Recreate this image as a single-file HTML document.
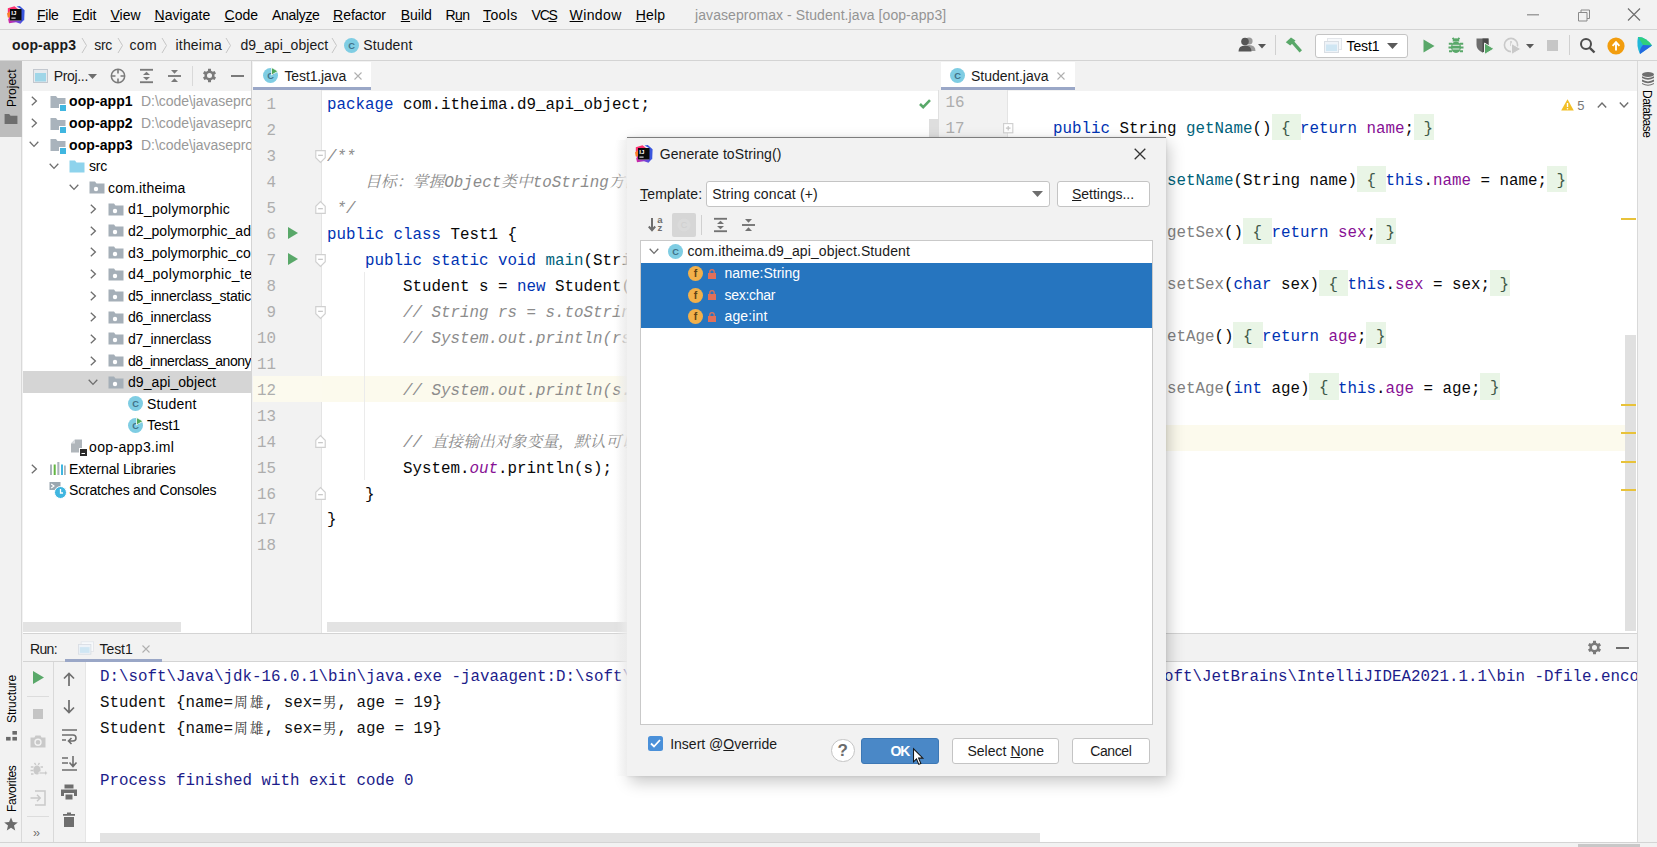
<!DOCTYPE html><html><head><meta charset='utf-8'><title>javasepromax - Student.java [oop-app3]</title><style>
*{box-sizing:border-box;margin:0;padding:0}
html,body{width:1657px;height:847px;overflow:hidden;background:#f2f2f2;}
body{position:relative;font-family:"Liberation Sans","Noto Sans CJK SC",sans-serif;font-size:14px;color:#000;}
.a{position:absolute;white-space:pre;}
.t{position:absolute;white-space:pre;line-height:20px;height:20px;}
.m{font-family:"Liberation Mono","Noto Serif CJK SC",monospace;font-size:15.83px;white-space:pre;}
u{text-decoration:underline;text-underline-offset:1.2px;text-decoration-thickness:1px}
svg{position:absolute;overflow:visible}
.kw{color:#0033b3} .cm{color:#8c8c8c;font-style:italic} .fn{color:#00627a} .fd{color:#871094} .un{color:#808080}
.fb{background:#e9f5e6;padding:6.2px 1px 2.2px 0;margin-right:-1px;color:#3f5a49}
.cj{display:inline-block;width:15.83px;font-size:13.8px;text-align:center;color:#3a3a3a}
</style></head><body>
<div class='a' style='left:0;top:0;width:1657px;height:30px;background:#f2f2f2;border-bottom:1px solid #d4d4d4'></div>
<svg style="left:7px;top:6px" width="18" height="18" viewBox="0 0 18 18">
<defs><linearGradient id="lgA" x1="0" y1="0" x2="1" y2="0"><stop offset="0" stop-color="#d6249f"/><stop offset="0.5" stop-color="#8a3fd1"/><stop offset="1" stop-color="#2b5be8"/></linearGradient></defs>
<path d="M0.8 2.2 L7.5 0.2 L11 3 L3 10 L0.8 8 Z" fill="#fc2f6e"/><path d="M0 7.5 L3 5 L3 12 L0.8 11.5 Z" fill="#fb7d2a"/>
<path d="M9.5 0.6 L12.8 0 L17.6 4.2 L17.2 14.2 L14 14.2 L14 3 Z" fill="#3a56dd"/>
<path d="M1.2 13.2 L3 10.5 L3 14.5 L14 14.5 L14 12 L17.2 13.5 L13.5 17.8 L9 16.2 L2 17.3 Z" fill="url(#lgA)"/>
<rect x="3" y="3" width="11.5" height="11.5" fill="#0a0a0a"/>
<rect x="4.4" y="11.6" width="4.2" height="1" fill="#fff"/>
<text x="4.2" y="9.4" font-family='"Liberation Sans",sans-serif' font-size="6.2" font-weight="700" fill="#fff">IJ</text></svg>
<div class='t' style='left:37px;top:5px;letter-spacing:-0.265px;'><u>F</u>ile</div>
<div class='t' style='left:72.5px;top:5px;letter-spacing:-0.106px;'><u>E</u>dit</div>
<div class='t' style='left:110.5px;top:5px;letter-spacing:-0.023px;'><u>V</u>iew</div>
<div class='t' style='left:154.5px;top:5px;letter-spacing:0.068px;'><u>N</u>avigate</div>
<div class='t' style='left:224.5px;top:5px;letter-spacing:0.008px;'><u>C</u>ode</div>
<div class='t' style='left:272px;top:5px;letter-spacing:-0.330px;'>Analy<u>z</u>e</div>
<div class='t' style='left:333px;top:5px;letter-spacing:0.011px;'><u>R</u>efactor</div>
<div class='t' style='left:400.8px;top:5px;letter-spacing:-0.027px;'><u>B</u>uild</div>
<div class='t' style='left:445.4px;top:5px;letter-spacing:-0.561px;'>R<u>u</u>n</div>
<div class='t' style='left:483px;top:5px;letter-spacing:0.363px;'><u>T</u>ools</div>
<div class='t' style='left:531.6px;top:5px;letter-spacing:-1.263px;'>VC<u>S</u></div>
<div class='t' style='left:569.6px;top:5px;letter-spacing:0.368px;'><u>W</u>indow</div>
<div class='t' style='left:635.8px;top:5px;letter-spacing:0.176px;'><u>H</u>elp</div>
<div class='t' style='left:695px;top:5px;color:#949494;letter-spacing:0.080px;'>javasepromax - Student.java [oop-app3]</div>
<svg style="left:1520px;top:4px" width="130" height="22" viewBox="0 0 130 22" fill="none" stroke="#8a8a8a" stroke-width="1.2">
<path d="M7 10.8 H19"/><path d="M58.5 8.5 h8.5 v8.5 h-8.5 z M61 8.5 v-2.5 h8.5 v8.5 h-2.5" stroke-width="1"/><path d="M108 4.5 L120 16.5 M120 4.5 L108 16.5" stroke="#6e6e6e"/></svg>
<div class='a' style='left:0;top:30px;width:1657px;height:31px;background:#f2f2f2;border-bottom:1px solid #d4d4d4'></div>
<div class='t' style='left:12px;top:35px;font-weight:700;color:#1a1a1a;letter-spacing:0.151px;'>oop-app3</div>
<div class='t' style='left:94.2px;top:35px;color:#1a1a1a;letter-spacing:-0.288px;'>src</div>
<div class='t' style='left:129.5px;top:35px;color:#1a1a1a;letter-spacing:0.350px;'>com</div>
<div class='t' style='left:175.5px;top:35px;color:#1a1a1a;letter-spacing:0.195px;'>itheima</div>
<div class='t' style='left:240.5px;top:35px;color:#1a1a1a;letter-spacing:0.039px;'>d9_api_object</div>
<div class='t' style='left:363.2px;top:35px;color:#1a1a1a;letter-spacing:0.148px;'>Student</div>
<svg style='left:81px;top:37px' width='7' height='17' viewBox='0 0 7 17' fill='none' stroke='#c6c6c6' stroke-width='1'><path d='M1 1 L5.5 8.5 L1 16'/></svg>
<svg style='left:117px;top:37px' width='7' height='17' viewBox='0 0 7 17' fill='none' stroke='#c6c6c6' stroke-width='1'><path d='M1 1 L5.5 8.5 L1 16'/></svg>
<svg style='left:161px;top:37px' width='7' height='17' viewBox='0 0 7 17' fill='none' stroke='#c6c6c6' stroke-width='1'><path d='M1 1 L5.5 8.5 L1 16'/></svg>
<svg style='left:225px;top:37px' width='7' height='17' viewBox='0 0 7 17' fill='none' stroke='#c6c6c6' stroke-width='1'><path d='M1 1 L5.5 8.5 L1 16'/></svg>
<svg style='left:331px;top:37px' width='7' height='17' viewBox='0 0 7 17' fill='none' stroke='#c6c6c6' stroke-width='1'><path d='M1 1 L5.5 8.5 L1 16'/></svg>
<svg style='left:344px;top:37.5px;opacity:1' width='15.0' height='15.0' viewBox='0 0 15 15'><circle cx='7.5' cy='7.5' r='7.5' fill='#7fcde3'/><text x='7.5' y='10.8' text-anchor='middle' font-family='"Liberation Sans",sans-serif' font-size='9.3' font-weight='700' fill='#3f7187'>C</text></svg>
<svg style="left:1238px;top:36px" width="30" height="18" viewBox="0 0 30 18">
<circle cx="11" cy="5" r="3.6" fill="#9a9a9a"/><path d="M4.5 15 q0 -6 6.5 -6 q6.5 0 6.5 6 z" fill="#9a9a9a"/>
<circle cx="7" cy="5.5" r="3.8" fill="#555"/><path d="M0.5 15.5 q0 -6 6.5 -6 q6.5 0 6.5 6 z" fill="#555"/>
<path d="M20 8 h8 l-4 4.5 z" fill="#555"/></svg>
<div class='a' style='left:1275px;top:35px;width:1px;height:20px;background:#d0d0d0'></div>
<svg style="left:1285px;top:37px" width="18" height="17" viewBox="0 0 18 17">
<path d="M6.5 6.2 L8.8 4 L17 13.2 L14.6 15.6 Z" fill="#59a869"/><path d="M0.8 5.2 L6 0.6 L10.5 3.5 L5.2 8.6 Z" fill="#59a869"/></svg>
<div class='a' style='left:1315px;top:34px;width:93px;height:24px;background:#fff;border:1px solid #c4c4c4;border-radius:3px'></div>
<svg style="left:1324px;top:38px" width="18" height="15" viewBox="0 0 18 15"><rect x="3.5" y="0.5" width="14" height="11" fill="#f7f9fb" stroke="#e3e6ea"/><rect x="0.5" y="3.5" width="14" height="11" fill="#eef3f8" stroke="#d9dee4"/><rect x="2" y="6.5" width="11" height="6.5" fill="#cfe6f3"/></svg>
<div class='t' style='left:1346.5px;top:36px;letter-spacing:-0.092px;'>Test1</div>
<svg style='left:1387px;top:43px' width='11' height='6' viewBox='0 0 11 6'><path d='M0 0 h11 l-5.5 6 z' fill='#5a5a5a'/></svg>
<svg style='left:1423px;top:39px' width='12' height='14' viewBox='0 0 12 14'><path d='M0.5 0.5 L11.5 7 L0.5 13.5 Z' fill='#59a869'/></svg>
<svg style="left:1448px;top:37px" width="16" height="17" viewBox="0 0 16 17" fill="#59a869" stroke="#59a869">
<ellipse cx="8" cy="10.2" rx="5" ry="5.8" stroke="none"/><path d="M4.6 4.6 a3.4 3.4 0 0 1 6.8 0 z" stroke="none"/>
<path d="M0.8 6.8 H4 M12 6.8 H15.2 M0.5 10.5 H4 M12 10.5 H15.5 M1 14.2 H4 M12 14.2 H15 M4.6 0.8 L6.2 2.8 M11.4 0.8 L9.8 2.8" stroke-width="1.9" fill="none"/>
<path d="M4.5 8.3 H11.5 M4.5 12 H11.5" stroke="#f2f2f2" stroke-width="0.9"/></svg>
<svg style="left:1476px;top:37px" width="18" height="18" viewBox="0 0 18 18"><path d="M0.5 1.5 H12.5 V8 Q12.5 13 6.5 15.5 Q0.5 13 0.5 8 Z" fill="#6e6e6e"/><path d="M6.5 1.5 H12.5 V8 Q12.5 13 6.5 15.5 Z" fill="#4a4a4a"/><path d="M8.5 6 L18 11.8 L8.5 17.5 Z" fill="#59a869" stroke="#f2f2f2" stroke-width="1"/></svg>
<svg style="left:1503px;top:37px" width="34" height="18" viewBox="0 0 34 18"><circle cx="8" cy="8" r="6.6" fill="none" stroke="#c9c9c9" stroke-width="1.6"/><path d="M8 4 V8.5 L10.5 10.5" stroke="#c9c9c9" stroke-width="1.4" fill="none"/><path d="M8.5 6.5 L18 12 L8.5 17.5 Z" fill="#c9c9c9" stroke="#f2f2f2" stroke-width="1"/><path d="M23 7 h8 l-4 4.5 z" fill="#5a5a5a"/></svg>
<div class='a' style='left:1546.5px;top:40px;width:11px;height:11px;background:#c6c6c6'></div>
<div class='a' style='left:1569px;top:35px;width:1px;height:20px;background:#d0d0d0'></div>
<svg style="left:1579px;top:37px" width="17" height="17" viewBox="0 0 17 17" fill="none" stroke="#4d4d4d"><circle cx="7" cy="7" r="5" stroke-width="2"/><path d="M10.8 10.8 L15.5 15.5" stroke-width="2.4"/></svg>
<svg style="left:1607px;top:37px" width="18" height="18" viewBox="0 0 18 18"><circle cx="9" cy="9" r="8.6" fill="#f29d0e"/><path d="M9 13.5 V6 M5.6 8.8 L9 5.2 L12.4 8.8" stroke="#fff" stroke-width="1.9" fill="none"/></svg>
<svg style="left:1636px;top:36px" width="17" height="19" viewBox="0 0 17 19"><path d="M2 1 Q9 0 16 9.5 L4 18 Q0 10 2 1 Z" fill="#21b7d9"/><path d="M2 1 Q10 1 16 9.5 L7 9 Z" fill="#2fd07c"/><path d="M16 9.5 L4 18 Q3 13 7 9 Z" fill="#2468e0"/></svg>
<div class='a' style='left:0;top:61px;width:22px;height:781px;background:#f2f2f2;border-right:1px solid #d9d9d9'></div>
<div class='a' style='left:0;top:61px;width:22px;height:76px;background:#bdbdbd'></div>
<div class='a' style='left:11.6px;top:107px;width:0;height:0'><div style='position:absolute;left:0;top:0;transform:rotate(-90deg);transform-origin:0 0;white-space:pre;font-size:12px;line-height:16px;height:16px;margin-top:0;letter-spacing:0.022px;'><span style='position:absolute;left:0;top:-8px'>Project</span></div></div>
<svg style="left:4px;top:113px" width="14" height="11" viewBox="0 0 14 12"><path d="M0 1 H5 L6.5 3 H14 V12 H0 Z" fill="#6e6e6e"/></svg>
<div class='a' style='left:12px;top:723px;width:0;height:0'><div style='position:absolute;left:0;top:0;transform:rotate(-90deg);transform-origin:0 0;white-space:pre;font-size:12px;line-height:16px;height:16px;margin-top:0;letter-spacing:-0.076px;'><span style='position:absolute;left:0;top:-8px'>Structure</span></div></div>
<svg style="left:6px;top:730.5px" width="11" height="10" viewBox="0 0 12 11" fill="#6a6a6a"><rect x="7" y="0" width="5" height="4"/><rect x="0" y="6.5" width="5" height="4"/><rect x="7" y="6.5" width="5" height="4"/></svg>
<div class='a' style='left:12px;top:811.5px;width:0;height:0'><div style='position:absolute;left:0;top:0;transform:rotate(-90deg);transform-origin:0 0;white-space:pre;font-size:12px;line-height:16px;height:16px;margin-top:0;letter-spacing:-0.317px;'><span style='position:absolute;left:0;top:-8px'>Favorites</span></div></div>
<svg style="left:4px;top:817px" width="14" height="14" viewBox="0 0 14 14"><path d="M7 0.5 L8.9 5 L13.8 5.4 L10 8.6 L11.2 13.4 L7 10.8 L2.8 13.4 L4 8.6 L0.2 5.4 L5.1 5 Z" fill="#6a6a6a"/></svg>
<div class='a' style='left:23px;top:61px;width:229px;height:572px;background:#fff;border-right:1px solid #d4d4d4'></div>
<div class='a' style='left:23px;top:61px;width:228px;height:29.5px;background:#f2f2f2;'></div>
<svg style="left:33px;top:69px" width="15" height="14" viewBox="0 0 15 14"><rect x="0.5" y="0.5" width="14" height="13" fill="#e6eaee" stroke="#c3c8cf"/><rect x="2" y="4" width="11" height="8.5" fill="#9fd6e8"/></svg>
<div class='t' style='left:53.7px;top:66px;color:#1a1a1a;letter-spacing:-0.324px;'>Proj...</div>
<svg style='left:88px;top:74px' width='9' height='5' viewBox='0 0 9 5'><path d='M0 0 h9 l-4.5 5 z' fill='#6e6e6e'/></svg>
<svg style="left:110px;top:68px" width="16" height="16" viewBox="0 0 16 16" fill="none" stroke="#7a7a7a" stroke-width="1.5"><circle cx="8" cy="8" r="6.7"/><path d="M8 1 V5.5 M8 10.5 V15 M1 8 H5.5 M10.5 8 H15" stroke-width="1.6"/></svg>
<svg style="left:139.5px;top:68px" width="13" height="16" viewBox="0 0 14 16" fill="#7a7a7a"><rect x="0" y="0.3" width="14" height="2"/><rect x="0" y="13.7" width="14" height="2"/><path d="M7 3.5 L10.8 7 H3.2 Z"/><path d="M7 12.5 L10.8 9 H3.2 Z"/></svg>
<svg style="left:167.5px;top:68px" width="13" height="16" viewBox="0 0 14 16" fill="#7a7a7a"><rect x="0" y="7" width="14" height="2"/><path d="M7 5.5 L10.8 1.5 H3.2 Z"/><path d="M7 10.5 L10.8 14.5 H3.2 Z"/></svg>
<div class='a' style='left:192px;top:66px;width:1px;height:20px;background:#d9d9d9'></div>
<svg style='left:201.5px;top:68px' width='15' height='15' viewBox='0 0 16 16' fill='#7a7a7a'><path d="M6.33 2.86 L6.48 0.86 L9.52 0.86 L9.67 2.86 L11.61 3.99 L13.42 3.12 L14.94 5.74 L13.28 6.88 L13.28 9.12 L14.94 10.26 L13.42 12.88 L11.61 12.01 L9.67 13.14 L9.52 15.14 L6.48 15.14 L6.33 13.14 L4.39 12.01 L2.58 12.88 L1.06 10.26 L2.72 9.12 L2.72 6.88 L1.06 5.74 L2.58 3.12 L4.39 3.99 Z M10.70 8 a2.7 2.7 0 1 0 -5.40 0 a2.7 2.7 0 1 0 5.40 0 Z" fill-rule="evenodd"/></svg>
<div class='a' style='left:231px;top:75px;width:13px;height:2px;background:#7a7a7a'></div>
<div class='a' style='left:23px;top:371.33px;width:228px;height:21.61px;background:#d5d5d5'></div>
<svg style='left:31px;top:96.21px' width='7' height='10' viewBox='0 0 7 10' fill='none' stroke='#6e6e6e' stroke-width='1.3'><path d='M0.8 0.7 L5.4 5 L0.8 9.3'/></svg>
<svg style='left:50px;top:95.01px' width='17' height='16' viewBox='0 0 17 16'><path d='M0.5 1 H6 L7.5 3 H15.5 V13 H0.5 Z' fill='#a9b3bc'/><rect x='9' y='9' width='7' height='7' fill='#fff'/><rect x='10' y='10' width='6' height='6' fill='#40b6e0'/></svg>
<div class='t' style='left:69px;top:91.41px;font-weight:700;letter-spacing:0.088px;'>oop-app1</div>
<div class='t' style='left:141px;top:91.31px;letter-spacing:-0.050px;width:110px;overflow:hidden;color:#999;'>D:\code\javasepromax</div>
<svg style='left:31px;top:117.81px' width='7' height='10' viewBox='0 0 7 10' fill='none' stroke='#6e6e6e' stroke-width='1.3'><path d='M0.8 0.7 L5.4 5 L0.8 9.3'/></svg>
<svg style='left:50px;top:116.61px' width='17' height='16' viewBox='0 0 17 16'><path d='M0.5 1 H6 L7.5 3 H15.5 V13 H0.5 Z' fill='#a9b3bc'/><rect x='9' y='9' width='7' height='7' fill='#fff'/><rect x='10' y='10' width='6' height='6' fill='#40b6e0'/></svg>
<div class='t' style='left:69px;top:113.02px;font-weight:700;letter-spacing:0.088px;'>oop-app2</div>
<div class='t' style='left:141px;top:112.91px;letter-spacing:-0.050px;width:110px;overflow:hidden;color:#999;'>D:\code\javasepromax</div>
<svg style='left:29px;top:140.93px' width='10' height='7' viewBox='0 0 10 7' fill='none' stroke='#6e6e6e' stroke-width='1.3'><path d='M0.7 0.8 L5 5.4 L9.3 0.8'/></svg>
<svg style='left:50px;top:138.23px' width='17' height='16' viewBox='0 0 17 16'><path d='M0.5 1 H6 L7.5 3 H15.5 V13 H0.5 Z' fill='#a9b3bc'/><rect x='9' y='9' width='7' height='7' fill='#fff'/><rect x='10' y='10' width='6' height='6' fill='#40b6e0'/></svg>
<div class='t' style='left:69px;top:134.62px;font-weight:700;letter-spacing:0.088px;'>oop-app3</div>
<div class='t' style='left:141px;top:134.53px;letter-spacing:-0.050px;width:110px;overflow:hidden;color:#999;'>D:\code\javasepromax</div>
<svg style='left:49px;top:162.54px' width='10' height='7' viewBox='0 0 10 7' fill='none' stroke='#6e6e6e' stroke-width='1.3'><path d='M0.7 0.8 L5 5.4 L9.3 0.8'/></svg>
<svg style='left:69px;top:159.54px' width='16' height='13' viewBox='0 0 16 13'><path d='M0.5 0.5 H6 L7.5 2.5 H15.5 V12.5 H0.5 Z' fill='#8ed3ec'/></svg>
<div class='t' style='left:89px;top:156.14px;letter-spacing:-0.221px;'>src</div>
<svg style='left:69px;top:184.15px' width='10' height='7' viewBox='0 0 10 7' fill='none' stroke='#6e6e6e' stroke-width='1.3'><path d='M0.7 0.8 L5 5.4 L9.3 0.8'/></svg>
<svg style='left:89px;top:181.15px' width='16' height='13' viewBox='0 0 16 13'><path d='M0.5 0.5 H6 L7.5 2.5 H15.5 V12.5 H0.5 Z' fill='#a5afb8'/><circle cx='7' cy='8' r='2.2' fill='#fff'/></svg>
<div class='t' style='left:108px;top:177.75px;letter-spacing:0.184px;'>com.itheima</div>
<svg style='left:90px;top:204.25px' width='7' height='10' viewBox='0 0 7 10' fill='none' stroke='#6e6e6e' stroke-width='1.3'><path d='M0.8 0.7 L5.4 5 L0.8 9.3'/></svg>
<svg style='left:108px;top:202.75px' width='16' height='13' viewBox='0 0 16 13'><path d='M0.5 0.5 H6 L7.5 2.5 H15.5 V12.5 H0.5 Z' fill='#a5afb8'/><circle cx='7' cy='8' r='2.2' fill='#fff'/></svg>
<div class='t' style='left:128px;top:199.35px;letter-spacing:0.226px;width:123px;overflow:hidden;'>d1_polymorphic</div>
<svg style='left:90px;top:225.87px' width='7' height='10' viewBox='0 0 7 10' fill='none' stroke='#6e6e6e' stroke-width='1.3'><path d='M0.8 0.7 L5.4 5 L0.8 9.3'/></svg>
<svg style='left:108px;top:224.37px' width='16' height='13' viewBox='0 0 16 13'><path d='M0.5 0.5 H6 L7.5 2.5 H15.5 V12.5 H0.5 Z' fill='#a5afb8'/><circle cx='7' cy='8' r='2.2' fill='#fff'/></svg>
<div class='t' style='left:128px;top:220.97px;letter-spacing:0.047px;width:123px;overflow:hidden;'>d2_polymorphic_advantage</div>
<svg style='left:90px;top:247.47px' width='7' height='10' viewBox='0 0 7 10' fill='none' stroke='#6e6e6e' stroke-width='1.3'><path d='M0.8 0.7 L5.4 5 L0.8 9.3'/></svg>
<svg style='left:108px;top:245.97px' width='16' height='13' viewBox='0 0 16 13'><path d='M0.5 0.5 H6 L7.5 2.5 H15.5 V12.5 H0.5 Z' fill='#a5afb8'/><circle cx='7' cy='8' r='2.2' fill='#fff'/></svg>
<div class='t' style='left:128px;top:242.57px;letter-spacing:0.093px;width:123px;overflow:hidden;'>d3_polymorphic_convert</div>
<svg style='left:90px;top:269.08px' width='7' height='10' viewBox='0 0 7 10' fill='none' stroke='#6e6e6e' stroke-width='1.3'><path d='M0.8 0.7 L5.4 5 L0.8 9.3'/></svg>
<svg style='left:108px;top:267.58px' width='16' height='13' viewBox='0 0 16 13'><path d='M0.5 0.5 H6 L7.5 2.5 H15.5 V12.5 H0.5 Z' fill='#a5afb8'/><circle cx='7' cy='8' r='2.2' fill='#fff'/></svg>
<div class='t' style='left:128px;top:264.19px;letter-spacing:0.358px;width:123px;overflow:hidden;'>d4_polymorphic_test</div>
<svg style='left:90px;top:290.69px' width='7' height='10' viewBox='0 0 7 10' fill='none' stroke='#6e6e6e' stroke-width='1.3'><path d='M0.8 0.7 L5.4 5 L0.8 9.3'/></svg>
<svg style='left:108px;top:289.19px' width='16' height='13' viewBox='0 0 16 13'><path d='M0.5 0.5 H6 L7.5 2.5 H15.5 V12.5 H0.5 Z' fill='#a5afb8'/><circle cx='7' cy='8' r='2.2' fill='#fff'/></svg>
<div class='t' style='left:128px;top:285.80px;letter-spacing:-0.193px;width:123px;overflow:hidden;'>d5_innerclass_static</div>
<svg style='left:90px;top:312.31px' width='7' height='10' viewBox='0 0 7 10' fill='none' stroke='#6e6e6e' stroke-width='1.3'><path d='M0.8 0.7 L5.4 5 L0.8 9.3'/></svg>
<svg style='left:108px;top:310.81px' width='16' height='13' viewBox='0 0 16 13'><path d='M0.5 0.5 H6 L7.5 2.5 H15.5 V12.5 H0.5 Z' fill='#a5afb8'/><circle cx='7' cy='8' r='2.2' fill='#fff'/></svg>
<div class='t' style='left:128px;top:307.41px;letter-spacing:-0.261px;width:123px;overflow:hidden;'>d6_innerclass</div>
<svg style='left:90px;top:333.92px' width='7' height='10' viewBox='0 0 7 10' fill='none' stroke='#6e6e6e' stroke-width='1.3'><path d='M0.8 0.7 L5.4 5 L0.8 9.3'/></svg>
<svg style='left:108px;top:332.42px' width='16' height='13' viewBox='0 0 16 13'><path d='M0.5 0.5 H6 L7.5 2.5 H15.5 V12.5 H0.5 Z' fill='#a5afb8'/><circle cx='7' cy='8' r='2.2' fill='#fff'/></svg>
<div class='t' style='left:128px;top:329.02px;letter-spacing:-0.261px;width:123px;overflow:hidden;'>d7_innerclass</div>
<svg style='left:90px;top:355.53px' width='7' height='10' viewBox='0 0 7 10' fill='none' stroke='#6e6e6e' stroke-width='1.3'><path d='M0.8 0.7 L5.4 5 L0.8 9.3'/></svg>
<svg style='left:108px;top:354.03px' width='16' height='13' viewBox='0 0 16 13'><path d='M0.5 0.5 H6 L7.5 2.5 H15.5 V12.5 H0.5 Z' fill='#a5afb8'/><circle cx='7' cy='8' r='2.2' fill='#fff'/></svg>
<div class='t' style='left:128px;top:350.63px;letter-spacing:-0.491px;width:123px;overflow:hidden;'>d8_innerclass_anonymous</div>
<svg style='left:88px;top:378.64px' width='10' height='7' viewBox='0 0 10 7' fill='none' stroke='#6e6e6e' stroke-width='1.3'><path d='M0.7 0.8 L5 5.4 L9.3 0.8'/></svg>
<svg style='left:108px;top:375.64px' width='16' height='13' viewBox='0 0 16 13'><path d='M0.5 0.5 H6 L7.5 2.5 H15.5 V12.5 H0.5 Z' fill='#a5afb8'/><circle cx='7' cy='8' r='2.2' fill='#fff'/></svg>
<div class='t' style='left:128px;top:372.24px;letter-spacing:0.062px;width:123px;overflow:hidden;'>d9_api_object</div>
<svg style='left:128px;top:396.24499999999995px;opacity:1' width='15.0' height='15.0' viewBox='0 0 15 15'><circle cx='7.5' cy='7.5' r='7.5' fill='#7fcde3'/><text x='7.5' y='10.8' text-anchor='middle' font-family='"Liberation Sans",sans-serif' font-size='9.3' font-weight='700' fill='#3f7187'>C</text></svg>
<div class='t' style='left:147px;top:393.84px;letter-spacing:0.177px;'>Student</div>
<svg style='left:128px;top:417.85499999999996px;opacity:1' width='15.0' height='15.0' viewBox='0 0 15 15'><circle cx='7.5' cy='7.5' r='7.5' fill='#7fcde3'/><text x='7.5' y='10.8' text-anchor='middle' font-family='"Liberation Sans",sans-serif' font-size='9.3' font-weight='700' fill='#3f7187'>C</text><path d='M8.5 -0.5 L15 3.2 L8.5 7 Z' fill='#4fa85a' stroke='#fff' stroke-width='0.8'/></svg>
<div class='t' style='left:147px;top:415.45px;letter-spacing:-0.092px;'>Test1</div>
<svg style='left:70px;top:438.96px' width='17' height='17' viewBox='0 0 17 17'><path d='M5 0.5 H12 V13.5 H1 V4.5 Z' fill='#b0b6bb'/><path d='M5 0.5 V4.5 H1 Z' fill='#d9dcdf'/><rect x='9' y='9' width='8' height='8' fill='#fff'/><rect x='10' y='10' width='7' height='7' fill='#2b2b2b'/><rect x='11.5' y='14' width='3.5' height='1' fill='#fff'/></svg>
<div class='t' style='left:89px;top:437.06px;letter-spacing:0.363px;'>oop-app3.iml</div>
<svg style='left:31px;top:463.57px' width='7' height='10' viewBox='0 0 7 10' fill='none' stroke='#6e6e6e' stroke-width='1.3'><path d='M0.8 0.7 L5.4 5 L0.8 9.3'/></svg>
<svg style='left:50px;top:462.07px' width='16' height='13' viewBox='0 0 16 13'><rect x='0' y='2.5' width='2' height='10.5' fill='#aab3bb'/><rect x='3.7' y='2.5' width='2' height='10.5' fill='#62b543'/><rect x='7.3' y='0' width='2.1' height='13' fill='#aab3bb'/><rect x='11' y='2.5' width='2' height='10.5' fill='#40b6e0'/><rect x='14' y='3.5' width='1.8' height='9.5' fill='#aab3bb'/></svg>
<div class='t' style='left:69px;top:458.68px;letter-spacing:-0.125px;'>External Libraries</div>
<svg style='left:49px;top:481.19px' width='18' height='18' viewBox='0 0 18 18'><path d='M0.5 1 H11.5 V9 H0.5 Z' fill='#9aa7b0'/><path d='M2.2 3 L5 5 L2.2 7' stroke='#fff' stroke-width='1.1' fill='none'/><circle cx='11.5' cy='11.5' r='6' fill='#40b6e0' stroke='#fff' stroke-width='1'/><path d='M11.5 8 V12 H14' stroke='#fff' stroke-width='1.3' fill='none'/></svg>
<div class='t' style='left:69px;top:480.29px;letter-spacing:-0.202px;'>Scratches and Consoles</div>
<div class='a' style='left:23px;top:622px;width:158px;height:10px;background:#e3e3e3'></div>
<div class='a' style='left:253px;top:90.5px;width:1384px;height:542.5px;background:#fff'></div>
<div class='a' style='left:253px;top:62px;width:118px;height:28px;background:#fff;border-bottom:3px solid #9aa7c7'></div>
<svg style='left:263px;top:68px;opacity:1' width='15.0' height='15.0' viewBox='0 0 15 15'><circle cx='7.5' cy='7.5' r='7.5' fill='#7fcde3'/><text x='7.5' y='10.8' text-anchor='middle' font-family='"Liberation Sans",sans-serif' font-size='9.3' font-weight='700' fill='#3f7187'>C</text><path d='M8.5 -0.5 L15 3.2 L8.5 7 Z' fill='#4fa85a' stroke='#fff' stroke-width='0.8'/></svg>
<div class='t' style='left:284.5px;top:66px;color:#1a1a1a;letter-spacing:-0.133px;'>Test1.java</div>
<svg style='left:354px;top:72px' width='8' height='8' viewBox='0 0 8 8'><path d='M0.5 0.5 L7.5 7.5 M7.5 0.5 L0.5 7.5' stroke='#b0b0b0' stroke-width='1.1' fill='none'/></svg>
<div class='a' style='left:938px;top:90px;width:3px;height:543px;background:#f2f2f2;border-left:1px solid #e0e0e0'></div>
<div class='a' style='left:941px;top:62px;width:134px;height:28px;background:#fff;border-bottom:3px solid #9aa7c7'></div>
<svg style='left:950px;top:68px;opacity:1' width='15.0' height='15.0' viewBox='0 0 15 15'><circle cx='7.5' cy='7.5' r='7.5' fill='#7fcde3'/><text x='7.5' y='10.8' text-anchor='middle' font-family='"Liberation Sans",sans-serif' font-size='9.3' font-weight='700' fill='#3f7187'>C</text></svg>
<div class='t' style='left:971px;top:66px;color:#1a1a1a;letter-spacing:-0.036px;'>Student.java</div>
<svg style='left:1057px;top:72px' width='8' height='8' viewBox='0 0 8 8'><path d='M0.5 0.5 L7.5 7.5 M7.5 0.5 L0.5 7.5' stroke='#b0b0b0' stroke-width='1.1' fill='none'/></svg>
<div class='a' style='left:253px;top:90px;width:69px;height:543px;background:#f2f2f2;border-right:1px solid #e4e4e4'></div>
<div class='a' style='left:322px;top:376.04px;width:606px;height:25.94px;background:#fcfaed'></div>
<div class='a' style='left:253px;top:376.04px;width:69px;height:25.94px;background:#fcfaee'></div>
<div class='a m' style='left:235px;width:41px;text-align:right;top:93.40px;line-height:25.94px;color:#adadad'>1</div>
<div class='a m' style='left:235px;width:41px;text-align:right;top:119.34px;line-height:25.94px;color:#adadad'>2</div>
<div class='a m' style='left:235px;width:41px;text-align:right;top:145.28px;line-height:25.94px;color:#adadad'>3</div>
<div class='a m' style='left:235px;width:41px;text-align:right;top:171.22px;line-height:25.94px;color:#adadad'>4</div>
<div class='a m' style='left:235px;width:41px;text-align:right;top:197.16px;line-height:25.94px;color:#adadad'>5</div>
<div class='a m' style='left:235px;width:41px;text-align:right;top:223.10px;line-height:25.94px;color:#adadad'>6</div>
<div class='a m' style='left:235px;width:41px;text-align:right;top:249.04px;line-height:25.94px;color:#adadad'>7</div>
<div class='a m' style='left:235px;width:41px;text-align:right;top:274.98px;line-height:25.94px;color:#adadad'>8</div>
<div class='a m' style='left:235px;width:41px;text-align:right;top:300.92px;line-height:25.94px;color:#adadad'>9</div>
<div class='a m' style='left:235px;width:41px;text-align:right;top:326.86px;line-height:25.94px;color:#adadad'>10</div>
<div class='a m' style='left:235px;width:41px;text-align:right;top:352.80px;line-height:25.94px;color:#adadad'>11</div>
<div class='a m' style='left:235px;width:41px;text-align:right;top:378.74px;line-height:25.94px;color:#adadad'>12</div>
<div class='a m' style='left:235px;width:41px;text-align:right;top:404.68px;line-height:25.94px;color:#adadad'>13</div>
<div class='a m' style='left:235px;width:41px;text-align:right;top:430.62px;line-height:25.94px;color:#adadad'>14</div>
<div class='a m' style='left:235px;width:41px;text-align:right;top:456.56px;line-height:25.94px;color:#adadad'>15</div>
<div class='a m' style='left:235px;width:41px;text-align:right;top:482.50px;line-height:25.94px;color:#adadad'>16</div>
<div class='a m' style='left:235px;width:41px;text-align:right;top:508.44px;line-height:25.94px;color:#adadad'>17</div>
<div class='a m' style='left:235px;width:41px;text-align:right;top:534.38px;line-height:25.94px;color:#adadad'>18</div>
<svg style='left:288px;top:227.37px' width='10' height='12' viewBox='0 0 10 12'><path d='M0 0 L10 6 L0 12 Z' fill='#59a869'/></svg>
<svg style='left:288px;top:253.31px' width='10' height='12' viewBox='0 0 10 12'><path d='M0 0 L10 6 L0 12 Z' fill='#59a869'/></svg>
<svg style='left:315.0px;top:150.35px' width='11' height='13' viewBox='0 0 9 11'><path d='M0.5 0.5 H8.5 V6.5 L4.5 10.5 L0.5 6.5 Z' fill='#fff' stroke='#d0d0d0'/><path d='M2.5 4.5 H6.5' stroke='#c4c4c4'/></svg>
<svg style='left:315.0px;top:201.23px' width='11' height='13' viewBox='0 0 9 11'><path d='M0.5 10.5 H8.5 V4.5 L4.5 0.5 L0.5 4.5 Z' fill='#fff' stroke='#d0d0d0'/><path d='M2.5 6.5 H6.5' stroke='#c4c4c4'/></svg>
<svg style='left:315.0px;top:254.11px' width='11' height='13' viewBox='0 0 9 11'><path d='M0.5 0.5 H8.5 V6.5 L4.5 10.5 L0.5 6.5 Z' fill='#fff' stroke='#d0d0d0'/><path d='M2.5 4.5 H6.5' stroke='#c4c4c4'/></svg>
<svg style='left:315.0px;top:305.99px' width='11' height='13' viewBox='0 0 9 11'><path d='M0.5 0.5 H8.5 V6.5 L4.5 10.5 L0.5 6.5 Z' fill='#fff' stroke='#d0d0d0'/><path d='M2.5 4.5 H6.5' stroke='#c4c4c4'/></svg>
<svg style='left:315.0px;top:434.69px' width='11' height='13' viewBox='0 0 9 11'><path d='M0.5 10.5 H8.5 V4.5 L4.5 0.5 L0.5 4.5 Z' fill='#fff' stroke='#d0d0d0'/><path d='M2.5 6.5 H6.5' stroke='#c4c4c4'/></svg>
<svg style='left:315.0px;top:486.57px' width='11' height='13' viewBox='0 0 9 11'><path d='M0.5 10.5 H8.5 V4.5 L4.5 0.5 L0.5 4.5 Z' fill='#fff' stroke='#d0d0d0'/><path d='M2.5 6.5 H6.5' stroke='#c4c4c4'/></svg>
<div class='a' style='left:363.5px;top:272.28px;width:1px;height:207.52px;background:#ebebeb'></div>
<div class='a' style='left:327px;top:90px;width:600px;height:532px;overflow:hidden'>
<div class='a m' style='left:0;top:3.40px;line-height:25.94px;color:#080808'><span class='kw'>package</span> com.itheima.d9_api_object;</div>
<div class='a m' style='left:0;top:55.28px;line-height:25.94px;color:#080808'><span class='cm'>/**</span></div>
<div class='a m' style='left:0;top:81.22px;line-height:25.94px;color:#080808'><span class='cm'>    目标：掌握Object类中toString方法的使用。</span></div>
<div class='a m' style='left:0;top:107.16px;line-height:25.94px;color:#080808'><span class='cm'> */</span></div>
<div class='a m' style='left:0;top:133.10px;line-height:25.94px;color:#080808'><span class='kw'>public class</span> Test1 {</div>
<div class='a m' style='left:0;top:159.04px;line-height:25.94px;color:#080808'>    <span class='kw'>public static void</span> <span class='fn'>main</span>(String[] args) {</div>
<div class='a m' style='left:0;top:184.98px;line-height:25.94px;color:#080808'>        Student s = <span class='kw'>new</span> Student("周雄", '男', 19);</div>
<div class='a m' style='left:0;top:210.92px;line-height:25.94px;color:#080808'>        <span class='cm'>// String rs = s.toString();</span></div>
<div class='a m' style='left:0;top:236.86px;line-height:25.94px;color:#080808'>        <span class='cm'>// System.out.println(rs);</span></div>
<div class='a m' style='left:0;top:288.74px;line-height:25.94px;color:#080808'>        <span class='cm'>// System.out.println(s.toString());</span></div>
<div class='a m' style='left:0;top:340.62px;line-height:25.94px;color:#080808'>        <span class='cm'>// 直接输出对象变量，默认可以省略toString调用不写的</span></div>
<div class='a m' style='left:0;top:366.56px;line-height:25.94px;color:#080808'>        System.<span class='fd' style='font-style:italic'>out</span>.println(s);</div>
<div class='a m' style='left:0;top:392.50px;line-height:25.94px;color:#080808'>    }</div>
<div class='a m' style='left:0;top:418.44px;line-height:25.94px;color:#080808'>}</div>
</div>
<svg style='left:919px;top:99px' width='12' height='10' viewBox='0 0 12 10'><path d='M1 5 L4.2 8.2 L11 1.2' stroke='#59a869' stroke-width='2.6' fill='none'/></svg>
<div class='a' style='left:929px;top:119px;width:9.5px;height:30px;background:#dedede'></div>
<div class='a' style='left:327px;top:622px;width:400px;height:10px;background:#e3e3e3'></div>
<div class='a' style='left:941px;top:90px;width:67px;height:543px;background:#f2f2f2;border-right:1px solid #e4e4e4'></div>
<div class='a' style='left:1008px;top:425.22px;width:617px;height:25.94px;background:#fcfaed'></div>
<div class='a' style='left:941px;top:425.22px;width:67px;height:25.94px;background:#fcfaee'></div>
<div class='a m' style='left:945.5px;top:91.00px;line-height:25.94px;color:#adadad'>16</div>
<div class='a m' style='left:945.5px;top:116.94px;line-height:25.94px;color:#adadad'>17</div>
<svg style='left:1003px;top:123.41px' width='10.4' height='10.4' viewBox='0 0 9 9'><rect x='0.5' y='0.5' width='8' height='8' fill='#fff' stroke='#d0d0d0'/><path d='M2.5 4.5 H6.5 M4.5 2.5 V6.5' stroke='#c4c4c4'/></svg>
<div class='a m' style='left:1053px;top:117.24px;line-height:24px;color:#080808'><span class='kw'>public</span> String <span class='fn'>getName</span>()<span class='fb'> { </span><span class='kw'>return</span> <span class='fd'>name</span>;<span class='fb'> }</span></div>
<div class='a m' style='left:1053px;top:169.12px;line-height:24px;color:#080808'><span class='kw'>public void</span> <span class='fn'>setName</span>(String name)<span class='fb'> { </span><span class='kw'>this</span>.<span class='fd'>name</span> = name;<span class='fb'> }</span></div>
<div class='a m' style='left:1053px;top:221.00px;line-height:24px;color:#080808'><span class='kw'>public char</span> <span class='un'>getSex</span>()<span class='fb'> { </span><span class='kw'>return</span> <span class='fd'>sex</span>;<span class='fb'> }</span></div>
<div class='a m' style='left:1053px;top:272.88px;line-height:24px;color:#080808'><span class='kw'>public void</span> <span class='un'>setSex</span>(<span class='kw'>char</span> sex)<span class='fb'> { </span><span class='kw'>this</span>.<span class='fd'>sex</span> = sex;<span class='fb'> }</span></div>
<div class='a m' style='left:1053px;top:324.76px;line-height:24px;color:#080808'><span class='kw'>public int</span> <span class='un'>getAge</span>()<span class='fb'> { </span><span class='kw'>return</span> <span class='fd'>age</span>;<span class='fb'> }</span></div>
<div class='a m' style='left:1053px;top:376.64px;line-height:24px;color:#080808'><span class='kw'>public void</span> <span class='un'>setAge</span>(<span class='kw'>int</span> age)<span class='fb'> { </span><span class='kw'>this</span>.<span class='fd'>age</span> = age;<span class='fb'> }</span></div>
<svg style='left:1561px;top:99px' width='13' height='12' viewBox='0 0 13 12'><path d='M6.5 0.3 L12.8 11.5 H0.2 Z' fill='#f2bf26'/><path d='M6.5 4 V8' stroke='#fff' stroke-width='1.4'/><circle cx='6.5' cy='9.8' r='0.8' fill='#fff'/></svg>
<div class='t' style='left:1577.3px;top:96px;font-size:13px;color:#787878'>5</div>
<svg style='left:1596.5px;top:101.8px' width='10' height='6' viewBox='0 0 10 6' fill='none' stroke='#6e6e6e' stroke-width='1.4'><path d='M0.8 5.4 L5 1 L9.2 5.4'/></svg>
<svg style='left:1618.5px;top:101.8px' width='10' height='6' viewBox='0 0 10 6' fill='none' stroke='#6e6e6e' stroke-width='1.4'><path d='M0.8 0.6 L5 5 L9.2 0.6'/></svg>
<div class='a' style='left:1625px;top:335px;width:11px;height:296px;background:#e0e0e0'></div>
<div class='a' style='left:1621px;top:218px;width:15px;height:2px;background:#e8c23a'></div>
<div class='a' style='left:1621px;top:404px;width:15px;height:2px;background:#e8c23a'></div>
<div class='a' style='left:1621px;top:432px;width:15px;height:2px;background:#e8c23a'></div>
<div class='a' style='left:1621px;top:461px;width:15px;height:2px;background:#e8c23a'></div>
<div class='a' style='left:1621px;top:489px;width:15px;height:2px;background:#e8c23a'></div>
<div class='a' style='left:1637px;top:61px;width:20px;height:781px;background:#f2f2f2;border-left:1px solid #d9d9d9'></div>
<svg style="left:1642px;top:72px" width="12" height="14" viewBox="0 0 12 14" fill="#6e6e6e"><ellipse cx="6" cy="2.5" rx="6" ry="2.5"/><path d="M0 4.2 Q6 7.8 12 4.2 V6 Q6 9.6 0 6 Z M0 7.6 Q6 11.2 12 7.6 V9.4 Q6 13 0 9.4 Z M0 11 Q6 14.6 12 11 V12 Q6 15.6 0 12 Z"/></svg>
<div class='a' style='left:1647px;top:90px;width:0;height:0'><div style='position:absolute;transform:rotate(90deg);transform-origin:0 0;white-space:pre;font-size:12px;line-height:16px;letter-spacing:-0.484px;'><span style='position:absolute;left:0;top:-8px'>Database</span></div></div>
<div class='a' style='left:23px;top:633px;width:1614px;height:29px;background:#f2f2f2;border-top:1px solid #d4d4d4;border-bottom:1px solid #d4d4d4'></div>
<div class='a' style='left:23px;top:662px;width:1614px;height:180px;background:#fff'></div>
<div class='t' style='left:30px;top:639px;color:#1a1a1a;letter-spacing:-0.643px;'>Run:</div>
<div class='a' style='left:65px;top:659px;width:97px;height:3px;background:#9aa7c7'></div>
<svg style="left:78px;top:641px" width="16" height="14" viewBox="0 0 18 15"><rect x="3.5" y="0.5" width="14" height="11" fill="#f7f9fb" stroke="#e3e6ea"/><rect x="0.5" y="3.5" width="14" height="11" fill="#eef3f8" stroke="#d9dee4"/><rect x="2" y="6.5" width="11" height="6.5" fill="#cfe6f3"/></svg>
<div class='t' style='left:99.6px;top:639px;color:#1a1a1a;letter-spacing:-0.092px;'>Test1</div>
<svg style='left:142px;top:645px' width='8' height='8' viewBox='0 0 8 8'><path d='M0.5 0.5 L7.5 7.5 M7.5 0.5 L0.5 7.5' stroke='#b0b0b0' stroke-width='1.1' fill='none'/></svg>
<svg style='left:1586.5px;top:640px' width='15' height='15' viewBox='0 0 16 16' fill='#7a7a7a'><path d="M6.33 2.86 L6.48 0.86 L9.52 0.86 L9.67 2.86 L11.61 3.99 L13.42 3.12 L14.94 5.74 L13.28 6.88 L13.28 9.12 L14.94 10.26 L13.42 12.88 L11.61 12.01 L9.67 13.14 L9.52 15.14 L6.48 15.14 L6.33 13.14 L4.39 12.01 L2.58 12.88 L1.06 10.26 L2.72 9.12 L2.72 6.88 L1.06 5.74 L2.58 3.12 L4.39 3.99 Z M10.70 8 a2.7 2.7 0 1 0 -5.40 0 a2.7 2.7 0 1 0 5.40 0 Z" fill-rule="evenodd"/></svg>
<div class='a' style='left:1616px;top:647px;width:13px;height:2px;background:#6e6e6e'></div>
<div class='a' style='left:23px;top:662px;width:31px;height:180px;background:#f2f2f2;border-right:1px solid #d9d9d9'></div>
<div class='a' style='left:54px;top:662px;width:32px;height:180px;background:#f2f2f2;border-right:1px solid #e6e6e6;'></div>
<svg style='left:33px;top:671px' width='11' height='13' viewBox='0 0 11 13'><path d='M0 0 L11 6.5 L0 13 Z' fill='#59a869'/></svg>
<div class='a' style='left:27px;top:696px;width:22px;height:1px;background:#dcdcdc'></div>
<div class='a' style='left:33px;top:709px;width:10px;height:10px;background:#c4c4c4'></div>
<svg style="left:30px;top:735px" width="16" height="13" viewBox="0 0 16 13"><path d="M0.5 2.5 H4.5 L5.5 0.5 H10.5 L11.5 2.5 H15.5 V12.5 H0.5 Z" fill="#c9c9c9"/><circle cx="8" cy="7.3" r="3" fill="none" stroke="#f2f2f2" stroke-width="1.4"/></svg>
<svg style="left:30px;top:762px" width="17" height="17" viewBox="0 0 17 17" fill="#c9c9c9" stroke="#c9c9c9"><ellipse cx="7" cy="8" rx="3.6" ry="4.6" stroke="none"/><path d="M0.8 5 H3.5 M10.5 5 H13 M0.5 8.5 H3.5 M1 12 H3.5 M4.5 1 L5.8 2.8 M9.5 1 L8.2 2.8" stroke-width="1.3" fill="none"/><path d="M9 10 h6 v-2 l2.5 3 l-2.5 3 v-2 h-6 z" stroke="#f2f2f2" stroke-width="0.8"/></svg>
<svg style="left:30px;top:790px" width="16" height="16" viewBox="0 0 16 16" fill="none" stroke="#c9c9c9" stroke-width="1.5"><path d="M5 1 H15 V15 H5"/><path d="M0.5 8 H10 M7 4.8 L10.2 8 L7 11.2"/></svg>
<div class='a' style='left:27px;top:816px;width:22px;height:1px;background:#dcdcdc'></div>
<div class='t' style='left:33px;top:823px;font-size:12px;color:#6e6e6e;letter-spacing:-1px'>››</div>
<svg style='left:63px;top:672px' width='12' height='14' viewBox='0 0 12 14' fill='none' stroke='#6e6e6e' stroke-width='1.7'><path d='M6 14 V2 M1 6.5 L6 1.5 L11 6.5'/></svg>
<svg style='left:63px;top:700px' width='12' height='14' viewBox='0 0 12 14' fill='none' stroke='#6e6e6e' stroke-width='1.7'><path d='M6 0 V12 M1 7.5 L6 12.5 L11 7.5'/></svg>
<svg style='left:62px;top:729px' width='15' height='14' viewBox='0 0 15 14' fill='none' stroke='#6e6e6e' stroke-width='1.6'><path d='M0 1 H15 M0 6 H11 a3 3 0 0 1 0 6 H7 M0 11 H4 M9.5 9 L6.5 12 L9.5 15'/></svg>
<svg style='left:62px;top:756px' width='15' height='15' viewBox='0 0 15 15' fill='none' stroke='#6e6e6e' stroke-width='1.6'><path d='M0 2 H6 M0 7 H6 M0 14 H15 M11 0 V10 M7.5 6.5 L11 10.5 L14.5 6.5'/></svg>
<svg style="left:61px;top:784px" width="16" height="16" viewBox="0 0 16 16" fill="#6e6e6e"><rect x="3.5" y="0.5" width="9" height="4"/><path d="M0 5.5 H16 V12 H13 V9 H3 V12 H0 Z"/><rect x="4.5" y="10.5" width="7" height="5"/></svg>
<svg style="left:63px;top:812px" width="12" height="15" viewBox="0 0 12 15" fill="#6e6e6e"><path d="M0 2 H4 V0.5 H8 V2 H12 V3.8 H0 Z"/><path d="M1 5 H11 V15 H1 Z"/></svg>
<div class='a' style='left:100px;top:664px;width:1537px;height:26px;overflow:hidden'><div class='m' style='position:absolute;left:0;top:0;width:560px;overflow:hidden;line-height:26px;color:#1c1c8a'>D:\soft\Java\jdk-16.0.1\bin\java.exe -javaagent:D:\soft\JetBrains\IntelliJIDEA2021.1.1\lib\idea_rt.jar=54215:D:\s</div><div class='m' style='position:absolute;left:1064px;top:0;line-height:26px;color:#1c1c8a'>oft\JetBrains\IntelliJIDEA2021.1.1\bin -Dfile.encoding=UTF-8</div></div>
<div class='a m' style='left:100px;top:690.00px;line-height:26px;color:#101010;'>Student {name=<span class='cj'>周</span><span class='cj'>雄</span>, sex=<span class='cj'>男</span>, age = 19}</div>
<div class='a m' style='left:100px;top:716.00px;line-height:26px;color:#101010;'>Student {name=<span class='cj'>周</span><span class='cj'>雄</span>, sex=<span class='cj'>男</span>, age = 19}</div>
<div class='a m' style='left:100px;top:768.00px;line-height:26px;color:#1c1c8a;'>Process finished with exit code 0</div>
<div class='a' style='left:99.5px;top:832.5px;width:940px;height:9.5px;background:#e3e3e3'></div>
<div class='a' style='left:0;top:842px;width:1657px;height:5px;background:#f2f2f2;border-top:1px solid #d4d4d4'></div>
<div class='a' style='left:1578px;top:844px;width:62px;height:3px;background:#c8c8c8'></div>
<div class='a' style='left:627px;top:137px;width:539px;height:639px;background:#f2f2f2;border-top:1px solid #7d7d7d;box-shadow:3px 6px 15px 0 rgba(0,0,0,0.22),0 0 3px rgba(0,0,0,0.10)'></div>
<div class='a' style='left:616px;top:140px;width:11px;height:636px;background:linear-gradient(to right,rgba(248,248,248,0),rgba(240,240,240,0.85))'></div>
<svg style="left:634.5px;top:144.5px" width="18" height="18" viewBox="0 0 18 18">
<defs><linearGradient id="lgB" x1="0" y1="0" x2="1" y2="0"><stop offset="0" stop-color="#d6249f"/><stop offset="0.5" stop-color="#8a3fd1"/><stop offset="1" stop-color="#2b5be8"/></linearGradient></defs>
<path d="M0.8 2.2 L7.5 0.2 L11 3 L3 10 L0.8 8 Z" fill="#fc2f6e"/><path d="M0 7.5 L3 5 L3 12 L0.8 11.5 Z" fill="#fb7d2a"/>
<path d="M9.5 0.6 L12.8 0 L17.6 4.2 L17.2 14.2 L14 14.2 L14 3 Z" fill="#3a56dd"/>
<path d="M1.2 13.2 L3 10.5 L3 14.5 L14 14.5 L14 12 L17.2 13.5 L13.5 17.8 L9 16.2 L2 17.3 Z" fill="url(#lgB)"/>
<rect x="3" y="3" width="11.5" height="11.5" fill="#0a0a0a"/>
<rect x="4.4" y="11.6" width="4.2" height="1" fill="#fff"/>
<text x="4.2" y="9.4" font-family='"Liberation Sans",sans-serif' font-size="6.2" font-weight="700" fill="#fff">IJ</text></svg>
<div class='t' style='left:659.7px;top:144px;color:#1a1a1a;letter-spacing:0.103px;'>Generate toString()</div>
<svg style='left:1134px;top:148px' width='12' height='12' viewBox='0 0 12 12'><path d='M0.7 0.7 L11.3 11.3 M11.3 0.7 L0.7 11.3' stroke='#333' stroke-width='1.3'/></svg>
<div class='t' style='left:640px;top:184px;color:#1a1a1a;letter-spacing:0.189px;'><u>T</u>emplate:</div>
<div class='a' style='left:706px;top:180.5px;width:344px;height:26px;background:#fff;border:1px solid #c4c4c4;border-radius:3px'></div>
<div class='t' style='left:712.2px;top:184px;color:#1a1a1a;letter-spacing:0.153px;'>String concat (+)</div>
<svg style='left:1032px;top:191px' width='11' height='6' viewBox='0 0 11 6'><path d='M0 0 h11 l-5.5 6 z' fill='#6e6e6e'/></svg>
<div class='a' style='left:1057px;top:180.5px;width:93px;height:26px;background:#fff;border:1px solid #c4c4c4;border-radius:3px'></div>
<div class='t' style='left:1072px;top:184px;color:#1a1a1a;letter-spacing:-0.023px;'><u>S</u>ettings...</div>
<svg style="left:648px;top:216px" width="16" height="16" viewBox="0 0 16 16"><path d="M4 2 V14 M0.8 10.5 L4 14.2 L7.2 10.5" stroke="#6e6e6e" stroke-width="2" fill="none"/><text x="9.3" y="7.2" font-family='"Liberation Sans",sans-serif' font-size="9.5" font-weight="700" fill="#6e6e6e">a</text><text x="9.5" y="15.2" font-family='"Liberation Sans",sans-serif' font-size="9.5" font-weight="700" fill="#6e6e6e">z</text></svg>
<div class='a' style='left:672px;top:213px;width:24px;height:24px;background:#d6d6d6;border-radius:2px'></div>
<svg style='left:677px;top:218px' width='14' height='14' viewBox='0 0 14 14'><circle cx='7' cy='7' r='6.5' fill='#dadada'/><text x='7' y='10.3' text-anchor='middle' font-family='"Liberation Sans",sans-serif' font-size='9' fill='#cfcfcf'>C</text></svg>
<div class='a' style='left:701px;top:215px;width:1px;height:20px;background:#d0d0d0'></div>
<svg style="left:713.5px;top:217px" width="13" height="16" viewBox="0 0 14 16" fill="#737373"><rect x="0" y="0.3" width="14" height="2"/><rect x="0" y="13.7" width="14" height="2"/><path d="M7 3.5 L10.8 7 H3.2 Z"/><path d="M7 12.5 L10.8 9 H3.2 Z"/></svg>
<svg style="left:741.5px;top:217px" width="13" height="16" viewBox="0 0 14 16" fill="#737373"><rect x="0" y="7" width="14" height="2"/><path d="M7 5.5 L10.8 1.5 H3.2 Z"/><path d="M7 10.5 L10.8 14.5 H3.2 Z"/></svg>
<div class='a' style='left:640px;top:240px;width:513px;height:485px;background:#fff;border:1px solid #c9c9c9'></div>
<svg style='left:649px;top:248px' width='10' height='7' viewBox='0 0 10 7' fill='none' stroke='#6e6e6e' stroke-width='1.3'><path d='M0.7 0.8 L5 5.4 L9.3 0.8'/></svg>
<svg style='left:667.5px;top:244px;opacity:1' width='15.0' height='15.0' viewBox='0 0 15 15'><circle cx='7.5' cy='7.5' r='7.5' fill='#7fcde3'/><text x='7.5' y='10.8' text-anchor='middle' font-family='"Liberation Sans",sans-serif' font-size='9.3' font-weight='700' fill='#3f7187'>C</text></svg>
<div class='t' style='left:687.4px;top:241px;color:#1a1a1a;letter-spacing:0.118px;'>com.itheima.d9_api_object.Student</div>
<div class='a' style='left:641px;top:263px;width:511px;height:64.5px;background:#2675bf'></div>
<svg style='left:687.5px;top:266.00px' width='15' height='15' viewBox='0 0 15 15'><circle cx='7.5' cy='7.5' r='7.5' fill='#f2b04a'/><text x='7.5' y='11' text-anchor='middle' font-family='"Liberation Sans",sans-serif' font-size='10.5' font-weight='700' fill='#5e4116'>f</text></svg>
<svg style='left:708px;top:268.50px' width='8' height='10' viewBox='0 0 8 10'><rect x='0' y='4' width='8' height='6' fill='#e0705a'/><path d='M1.8 4 V2.8 a2.2 2.2 0 0 1 4.4 0 V4' stroke='#e0705a' stroke-width='1.2' fill='none'/></svg>
<div class='t' style='left:724.5px;top:263.00px;color:#fff;letter-spacing:0.001px;'>name:String</div>
<svg style='left:687.5px;top:287.60px' width='15' height='15' viewBox='0 0 15 15'><circle cx='7.5' cy='7.5' r='7.5' fill='#f2b04a'/><text x='7.5' y='11' text-anchor='middle' font-family='"Liberation Sans",sans-serif' font-size='10.5' font-weight='700' fill='#5e4116'>f</text></svg>
<svg style='left:708px;top:290.10px' width='8' height='10' viewBox='0 0 8 10'><rect x='0' y='4' width='8' height='6' fill='#e0705a'/><path d='M1.8 4 V2.8 a2.2 2.2 0 0 1 4.4 0 V4' stroke='#e0705a' stroke-width='1.2' fill='none'/></svg>
<div class='t' style='left:724.5px;top:284.60px;color:#fff;letter-spacing:-0.276px;'>sex:char</div>
<svg style='left:687.5px;top:309.20px' width='15' height='15' viewBox='0 0 15 15'><circle cx='7.5' cy='7.5' r='7.5' fill='#f2b04a'/><text x='7.5' y='11' text-anchor='middle' font-family='"Liberation Sans",sans-serif' font-size='10.5' font-weight='700' fill='#5e4116'>f</text></svg>
<svg style='left:708px;top:311.70px' width='8' height='10' viewBox='0 0 8 10'><rect x='0' y='4' width='8' height='6' fill='#e0705a'/><path d='M1.8 4 V2.8 a2.2 2.2 0 0 1 4.4 0 V4' stroke='#e0705a' stroke-width='1.2' fill='none'/></svg>
<div class='t' style='left:724.5px;top:306.20px;color:#fff;letter-spacing:0.138px;'>age:int</div>
<div class='a' style='left:648px;top:736px;width:15px;height:15px;background:#4a90d9;border-radius:2.5px'></div>
<svg style='left:650px;top:739px' width='11' height='9' viewBox='0 0 11 9'><path d='M1 4.5 L4 7.5 L10 1' stroke='#fff' stroke-width='1.8' fill='none'/></svg>
<div class='t' style='left:670.2px;top:734px;color:#1a1a1a;letter-spacing:-0.000px;'>Insert @<u>O</u>verride</div>
<div class='a' style='left:831px;top:738.5px;width:23.5px;height:23.5px;background:#fff;border:1px solid #c4c4c4;border-radius:12px'></div>
<div class='t' style='left:831px;width:23.5px;text-align:center;top:740.5px;color:#6b6b6b;font-weight:700;font-size:17px'>?</div>
<div class='a' style='left:861px;top:738px;width:78px;height:25.5px;background:#4a88c7;border:1px solid #3d78b5;border-radius:3px'></div>
<div class='t' style='left:890.4px;top:741px;color:#fff;font-weight:700;letter-spacing:-1.000px;'>OK</div>
<div class='a' style='left:952px;top:738px;width:107px;height:25.5px;background:#fff;border:1px solid #c4c4c4;border-radius:3px'></div>
<div class='t' style='left:967.4px;top:741px;color:#1a1a1a;letter-spacing:0.030px;'>Select <u>N</u>one</div>
<div class='a' style='left:1072px;top:738px;width:78px;height:25.5px;background:#fff;border:1px solid #c4c4c4;border-radius:3px'></div>
<div class='t' style='left:1090.2px;top:741px;color:#1a1a1a;letter-spacing:-0.380px;'>Cancel</div>
<svg style='left:912.5px;top:748px' width='11' height='17.5' viewBox='0 0 12 19'><path d='M0.6 0.8 V15 L3.8 11.8 L6.3 17.8 L8.6 16.8 L6.1 11 H10.8 Z' fill='#fff' stroke='#111' stroke-width='1.1'/></svg>
</body></html>
